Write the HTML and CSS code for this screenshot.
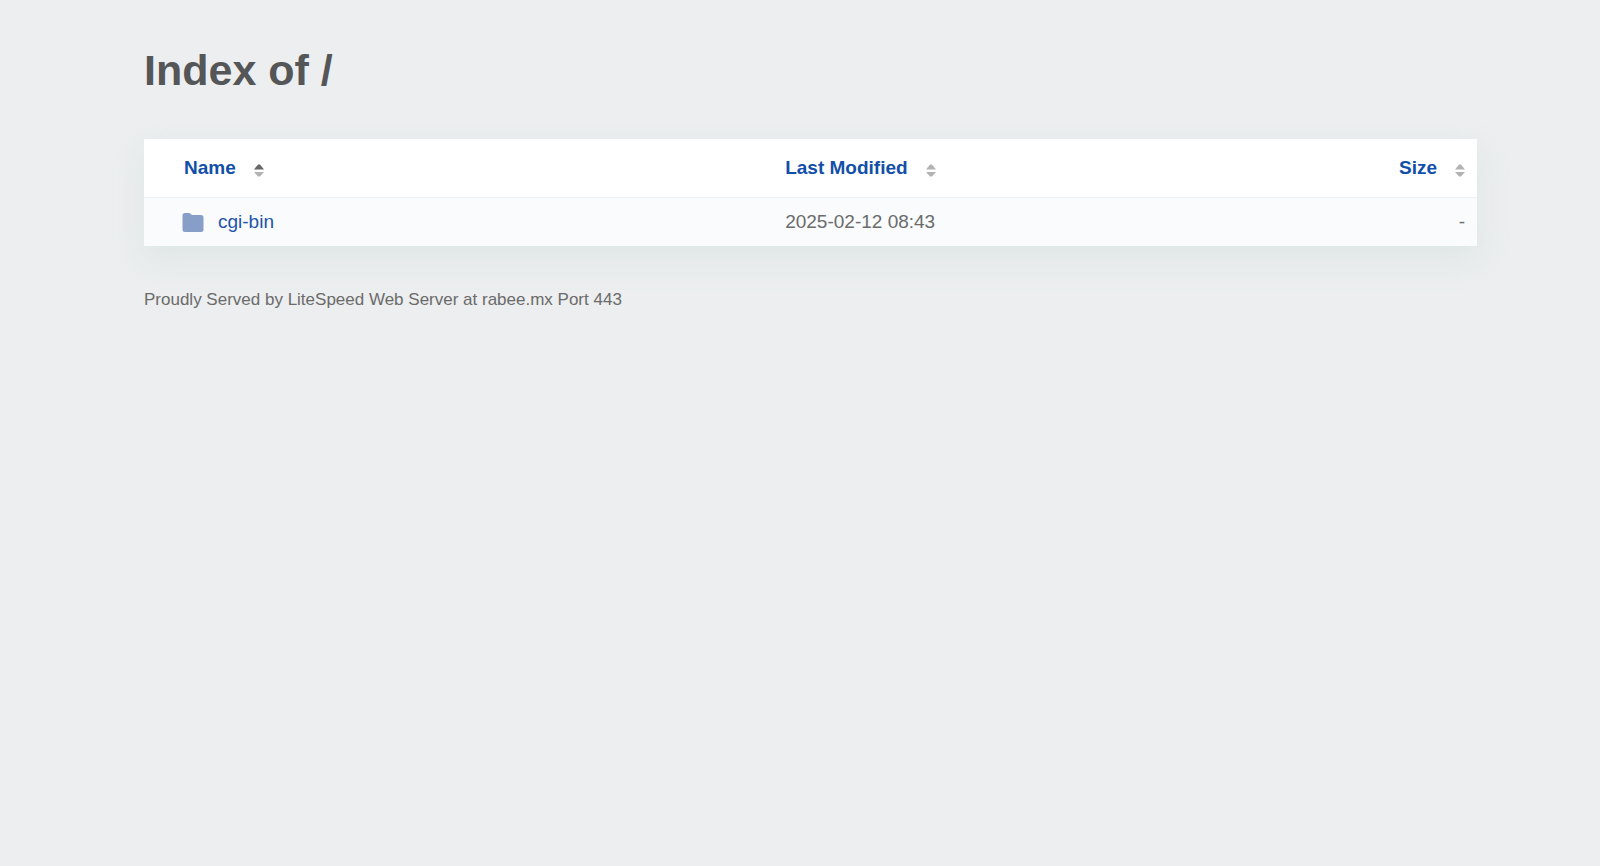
FILE: index.html
```html
<!DOCTYPE html>
<html lang="en">
<head>
<meta charset="utf-8">
<meta name="viewport" content="width=device-width, initial-scale=1">
<title>Index of /</title>
<link rel="stylesheet" href="styles.css">
</head>
<body>
<main class="content">
  <h1 class="title">Index of /</h1>
  <table class="listing">
    <colgroup>
      <col class="w-name">
      <col>
      <col class="w-size">
    </colgroup>
    <thead>
      <tr>
        <th class="col-name" scope="col" aria-sort="ascending"><button class="sort sort-asc" type="button">Name<svg class="arrows" viewBox="0 0 10 13" aria-hidden="true"><path class="up" d="M0 5.500L4 .5h2l4 5z"/><path class="down" d="M0 8h10l-4 4.500H4z"/></svg></button></th>
        <th class="col-date" scope="col"><button class="sort" type="button">Last Modified<svg class="arrows" viewBox="0 0 10 13" aria-hidden="true"><path class="up" d="M0 5.500L4 .5h2l4 5z"/><path class="down" d="M0 8h10l-4 4.500H4z"/></svg></button></th>
        <th class="col-size" scope="col"><button class="sort" type="button">Size<svg class="arrows" viewBox="0 0 10 13" aria-hidden="true"><path class="up" d="M0 5.500L4 .5h2l4 5z"/><path class="down" d="M0 8h10l-4 4.500H4z"/></svg></button></th>
      </tr>
    </thead>
    <tbody>
      <tr>
        <td class="col-name"><a class="entry" href="#cgi-bin"><svg class="folder" viewBox="0 0 22 19" aria-hidden="true"><path d="M3 0h4.500l2.500 2H19a2.500 2.500 0 0 1 2.500 2.500V16.500A2.500 2.500 0 0 1 19 19H3A2.500 2.500 0 0 1 .5 16.500V2.500A2.500 2.500 0 0 1 3 0z"/></svg>cgi-bin</a></td>
        <td class="col-date">2025-02-12 08:43</td>
        <td class="col-size">-</td>
      </tr>
    </tbody>
  </table>
  <footer class="footer">Proudly Served by LiteSpeed Web Server at rabee.mx Port 443</footer>
</main>
</body>
</html>
```
FILE: styles.css
```css
body {
  margin: 0;
  background: #eceeef;
  color: #6b6b6b;
  font-family: "Liberation Sans", Arial, sans-serif;
  font-size: 19px;
  line-height: 24px;
}

.content {
  margin: 0 auto;
  padding: 45px 123px 0 144px;
}

.title {
  margin: 0 0 44px;
  color: #545657;
  font-size: 43px;
  line-height: 50px;
}

.listing {
  width: 100%;
  border-collapse: collapse;
  table-layout: fixed;
  background: #fff;
  box-shadow: 0 12px 28px rgba(190, 212, 208, 0.3);
}

.w-name {
  width: 47.2%;
}

.w-size {
  width: 15%;
}

th,
td {
  padding: 12px;
  text-align: left;
}

th {
  padding: 17px 12px;
  border-bottom: 1px solid #edf1f3;
}

td {
  background: #f9fbfc;
}

.col-name {
  padding-left: 38px;
}

th.col-name {
  padding-left: 40px;
}

.col-size {
  text-align: right;
}

.sort {
  display: inline-flex;
  align-items: center;
  gap: 18px;
  padding: 0;
  border: 0;
  background: none;
  color: #124fa8;
  font: inherit;
  font-weight: bold;
  line-height: 24px;
  cursor: pointer;
}

.arrows {
  width: 10px;
  height: 13px;
  padding-top: 4px;
  fill: #b3b3b3;
}

.sort-asc .up {
  fill: #666;
}

.entry {
  display: flex;
  align-items: center;
  gap: 14px;
  color: #1f55a8;
  text-decoration: none;
}

.folder {
  width: 22px;
  height: 19px;
  fill: #879fc8;
}

.footer {
  padding: 42px 0;
  font-size: 17px;
}
```
